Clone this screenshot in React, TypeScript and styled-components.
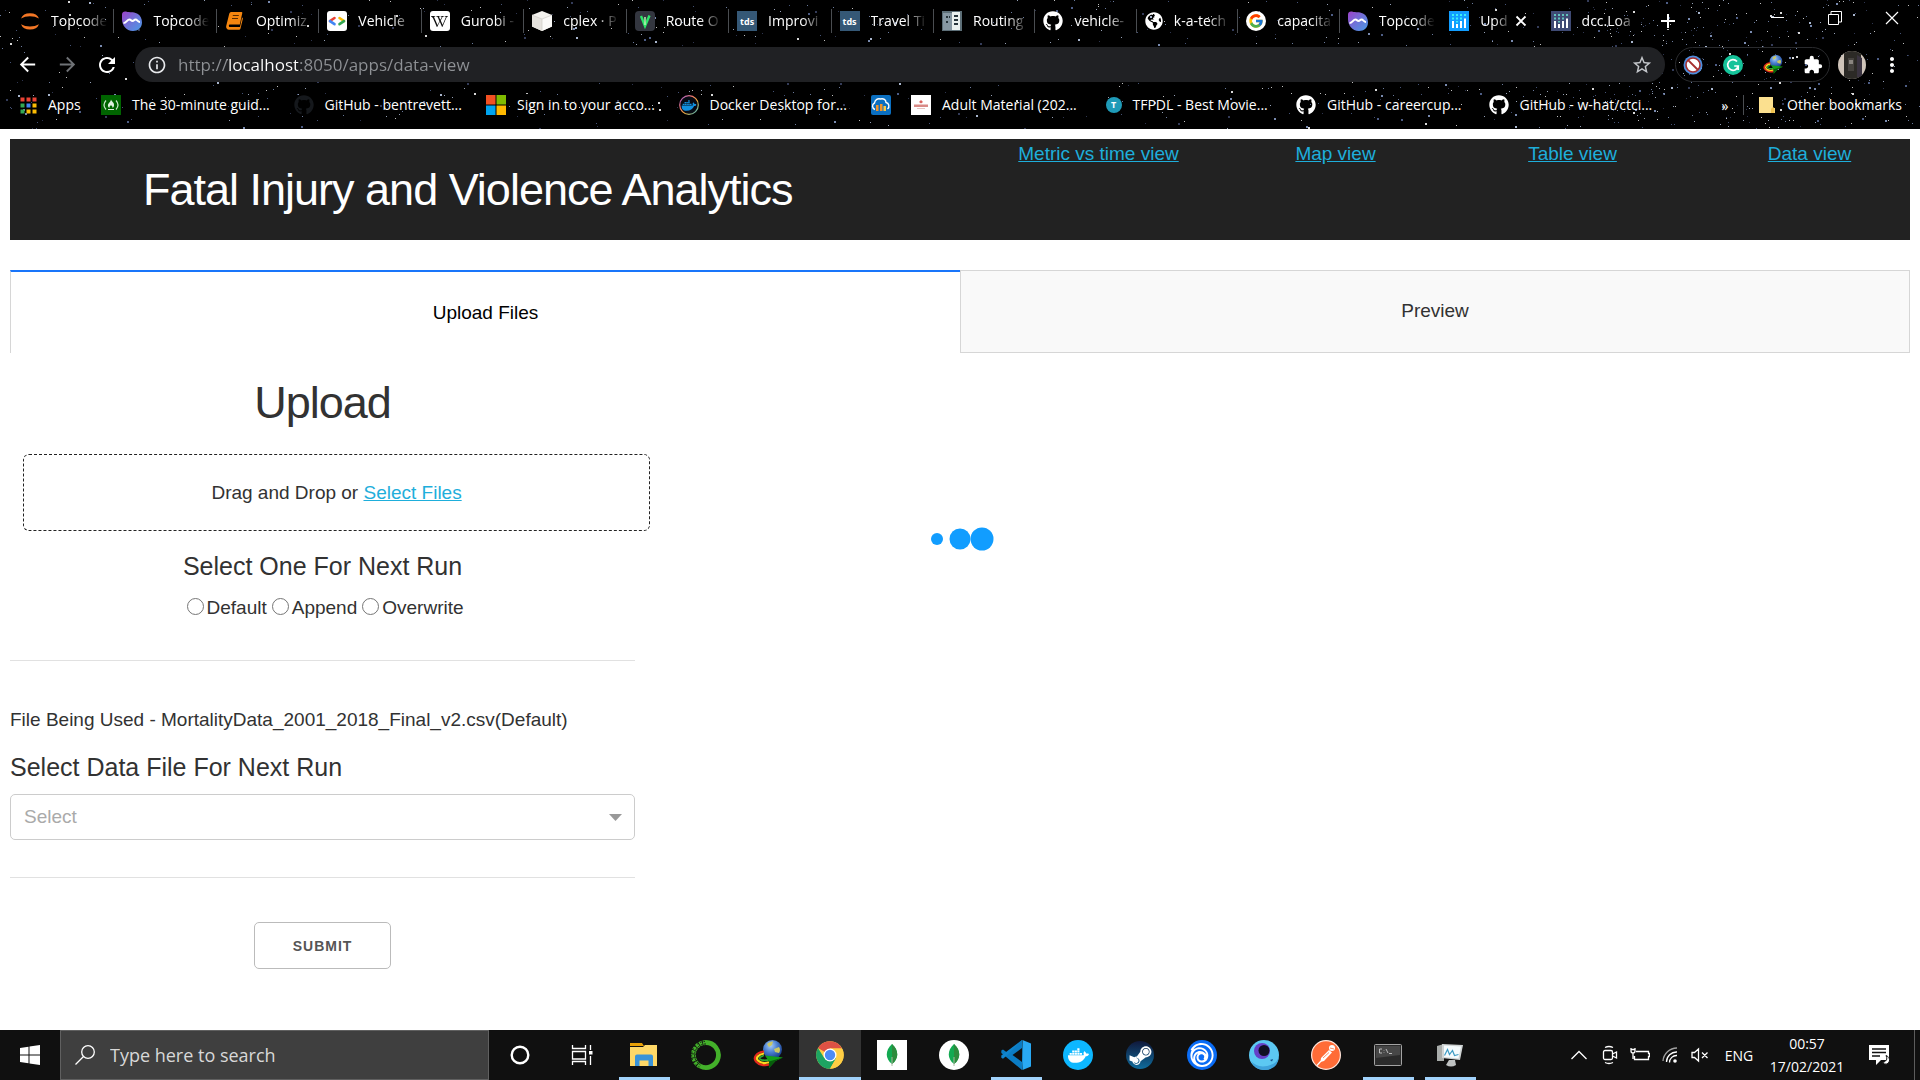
import React from "react";
import styled, { createGlobalStyle, css } from "styled-components";
import {
  MdArrowBack,
  MdArrowForward,
  MdRefresh,
  MdInfoOutline,
  MdStarBorder,
  MdExtension,
  MdMoreVert,
} from "react-icons/md";
import { FaGithub, FaWikipediaW, FaDocker, FaSteamSymbol, FaGlobeAmericas } from "react-icons/fa";
import { FcGoogle } from "react-icons/fc";
import { SiUbisoft } from "react-icons/si";

const uiFont = '"Open Sans", "Noto Sans", sans-serif';
const pageFont = '"Liberation Sans", Arial, sans-serif';

const GlobalStyle = createGlobalStyle`
  *, *::before, *::after { box-sizing: border-box; }
  body { margin: 0; background: #fff; }
  button, input, select { font: inherit; color: inherit; margin: 0; }
`;

/* ---------- shell ---------- */

const Screen = styled.div`
  min-height: 100vh;
  display: flex;
  flex-direction: column;
  font-family: ${pageFont};
`;

const Browser = styled.header`
  position: relative;
  isolation: isolate;
  display: flex;
  flex-direction: column;
  background: #000;
  color: #fff;
  font-family: ${uiFont};
  font-size: 14px;
`;

const StarField = styled.svg`
  position: absolute;
  inset: 0;
  z-index: -1;
  width: 100%;
  height: 100%;
`;

const TitleBar = styled.div`
  display: flex;
  height: 42px;
  padding-left: 12px;
`;

const TabList = styled.div`
  display: grid;
  grid-template-columns: repeat(9, 101fr) repeat(7, 100fr);
  flex: 0 1 1632px;
  min-width: 0;
`;

const BrowserTab = styled.button<{ $divider: boolean; $active: boolean }>`
  display: flex;
  align-items: center;
  min-width: 0;
  gap: 5px;
  padding: 0 ${(p) => (p.$active ? 16 : 2)}px 0 8px;
  border: 0;
  color: #fff;
  background: ${(p) =>
    p.$divider ? "linear-gradient(#4a4d51, #4a4d51) right center / 1px 24px no-repeat" : "none"};
`;

const TabTitle = styled.span<{ $active: boolean }>`
  flex: 1;
  min-width: 0;
  margin-left: 6px;
  white-space: nowrap;
  text-align: left;
  line-height: 20px;
  mask-image: linear-gradient(
    90deg,
    #000 ${(p) => (p.$active ? 14 : 34)}px,
    transparent ${(p) => (p.$active ? 32 : 56)}px
  );
`;

const PlainButton = styled.button<{ $w: number }>`
  display: flex;
  align-items: center;
  justify-content: center;
  flex: none;
  width: ${(p) => p.$w}px;
  padding: 0;
  border: 0;
  background: none;
  color: #fff;
`;

const WindowControls = styled.div`
  display: flex;
  height: 36px;
  margin-left: auto;
`;

const Toolbar = styled.div`
  display: flex;
  align-items: center;
  height: 45px;
  padding: 0 10px 0 7px;
`;

const Omnibox = styled.form`
  display: flex;
  align-items: center;
  flex: 1;
  height: 35px;
  margin: 0 10px 0 9px;
  padding: 0 12px;
  gap: 11px;
  border-radius: 18px;
  background: #202124;
  color: #e8eaed;
`;

const AddressInput = styled.input`
  flex: 1;
  min-width: 0;
  height: 35px;
  padding: 0;
  border: 0;
  outline: 0;
  font-size: 17px;
  color: transparent;
  background: linear-gradient(90deg, #8e9195 49px, #fff 49px, #fff 120px, #8e9195 120px);
  background-clip: text;
  -webkit-background-clip: text;
`;

const ExtensionPill = styled.div`
  display: flex;
  height: 35px;
  width: 155px;
  justify-content: center;
  border: 1px solid #2a2b2e;
  border-radius: 18px;
`;

const Bookmarks = styled.nav`
  display: flex;
  height: 42px;
  padding-left: 20px;
`;

const BookmarkGrid = styled.div`
  display: grid;
  flex: 1;
  grid-template-columns: 81px repeat(4, minmax(0, 1fr)) 40px repeat(4, minmax(0, 1fr));
  align-items: center;
  height: 36px;
`;

const Bookmark = styled.a`
  display: flex;
  align-items: center;
  gap: 11px;
  color: #fff;
  line-height: 20px;
  text-decoration: none;
  white-space: nowrap;
`;

const OtherBookmarks = styled.div`
  display: flex;
  align-items: center;
  justify-content: flex-end;
  width: 239px;
  height: 36px;
  padding-right: 18px;
`;

const Divider = styled.span`
  width: 1px;
  height: 20px;
  margin: 0 14px 0 6px;
  background: #4a4d51;
`;

/* ---------- dashboard ---------- */

const Page = styled.main`
  flex: 1;
  padding: 10px;
  color: #323232;
  font-size: 19px;
  line-height: 30px;
`;

const Banner = styled.header`
  display: flex;
  justify-content: space-between;
  background: #222;
  padding-left: 7%;
`;

const Title = styled.h1<{ $light?: boolean }>`
  margin: 0;
  font-size: 45px;
  font-weight: 400;
  line-height: 54px;
  letter-spacing: -1px;
  ${(p) => p.$light && css`
    padding: 24px 0 23px;
    color: #fff;
    white-space: nowrap;
  `}
`;

const ViewLinks = styled.nav`
  display: grid;
  grid-template-columns: repeat(4, 1fr);
  gap: 36px;
  width: 48%;
  max-width: 912px;
  flex: 1 0 auto;
  text-align: center;
`;

const BannerGap = styled.div`
  flex: 1 1 0;
`;

const Link = styled.a`
  color: #1eaedb;
`;

const PageTabs = styled.div`
  display: grid;
  grid-template-columns: 1fr 1fr;
  margin-top: 30px;
`;

const PageTab = styled.button<{ $selected?: boolean }>`
  padding: 24px 25px 26px;
  line-height: 31px;
  border: 1px solid #d6d6d6;
  background: #f9f9f9;
  ${(p) => p.$selected && css`
    padding: 25px;
    border-top: 2px solid #1975fa;
    border-right: 0;
    border-bottom: 0;
    background: #fff;
    color: #000;
  `}
`;

const Panel = styled.div`
  position: relative;
`;

const Form = styled.form`
  display: flex;
  flex-direction: column;
  align-items: center;
  width: 32.9%;
  padding-top: 23px;
`;

const DropZone = styled.div`
  box-sizing: content-box;
  width: 100%;
  flex: none;
  align-self: flex-start;
  margin: 24px 13px 19px;
  border: 1px dashed #222;
  border-radius: 6px;
  line-height: 75px;
  text-align: center;
`;

const Heading = styled.h2<{ $start?: boolean }>`
  margin: 0 0 11px;
  font-size: 25px;
  font-weight: 400;
  line-height: 32px;
  align-self: ${(p) => (p.$start ? "flex-start" : "center")};
`;

const Radios = styled.div`
  display: flex;
`;

const RadioLabel = styled.label`
  display: flex;
  align-items: center;
  gap: 3px;
`;

const Radio = styled.input`
  && { margin: 0 0 3px 5px; }
  appearance: none;
  width: 17px;
  height: 17px;
  border: 1px solid #767676;
  border-radius: 50%;
  background: #fff;
`;

const Rule = styled.hr`
  width: 100%;
  margin: 37px 0 44px;
  border: 0;
  border-top: 1px solid #e1e1e1;
`;

const FileNote = styled.p`
  align-self: flex-start;
  margin: 0 0 16px;
  white-space: nowrap;
`;

const SelectBox = styled.div`
  display: grid;
  align-items: center;
  width: 100%;
  & > * { grid-area: 1 / 1; }
  & > svg { justify-self: end; margin-right: 13px; pointer-events: none; }
`;

const Select = styled.select`
  appearance: none;
  width: 100%;
  height: 46px;
  padding: 0 13px;
  border: 1px solid #ccc;
  border-radius: 5px;
  background: #fff;
  color: #aaa;
`;

const Submit = styled.button`
  height: 47px;
  padding: 0 38px;
  border: 1px solid #bbb;
  border-radius: 5px;
  background: #fff;
  color: #555;
  font-size: 14px;
  font-weight: 600;
  letter-spacing: 1px;
`;

const Loading = styled.div`
  position: absolute;
  inset: 174px 0 auto;
  display: flex;
  justify-content: center;
  pointer-events: none;
`;

/* ---------- taskbar ---------- */

const Taskbar = styled.footer`
  display: flex;
  height: 50px;
  background: #101010;
  color: #fff;
  font-family: ${uiFont};
  font-size: 14px;
`;

const Search = styled.label`
  display: flex;
  align-items: center;
  gap: 15px;
  width: 429px;
  padding-left: 14px;
  border: 1px solid #606060;
  background: #3f3f3f;
`;

const SearchInput = styled.input`
  flex: 1;
  min-width: 0;
  padding: 0;
  border: 0;
  outline: 0;
  background: none;
  font-size: 18px;
  &::placeholder { color: #d8d8d8; opacity: 1; }
`;

const TaskButton = styled.button<{ $state?: "open" | "active" }>`
  display: flex;
  align-items: center;
  justify-content: center;
  width: 62px;
  padding: 0;
  border: 0;
  background: ${(p) => {
    const bar = "linear-gradient(#a1d2fb, #a1d2fb) center bottom";
    if (p.$state === "active") return `${bar} / 100% 3px no-repeat #333`;
    if (p.$state === "open") return `${bar} / 51px 3px no-repeat`;
    return "none";
  }};
`;

const Tray = styled.div`
  display: flex;
  align-items: center;
  margin-left: auto;
  padding-right: 5px;
`;

const Language = styled.span`
  width: 48px;
  text-align: center;
`;

const Clock = styled.time`
  width: 86px;
  margin: 0 14px 0 1px;
  line-height: 23px;
  text-align: center;
`;

const ShowDesktop = styled.span`
  width: 1px;
  height: 50px;
  margin-left: 20px;
  background: #5c5c5c;
`;

/* ---------- drawings ---------- */

const Stars = () => {
  let seed = 20210217;
  const rnd = () => {
    seed = (seed * 1103515245 + 12345) % 2147483648;
    return seed / 2147483648;
  };
  const tints = ["#8ea3cf", "#5b6d9c", "#c7d6f2", "#ffffff", "#3d4768"];
  const dots: React.ReactNode[] = [];
  for (let i = 0; i < 1250; i++) {
    let x = rnd() * 1920;
    if (i > 850) x = 1690 + (rnd() + rnd() + rnd() - 1.5) * 240;
    const y = rnd() * 129;
    const big = rnd() > 0.84;
    const tint = tints[Math.floor(rnd() * tints.length)];
    dots.push(
      <rect key={i} x={Math.floor(x)} y={Math.floor(y)} width={big ? 2 : 1} height={big ? 2 : 1} fill={tint} opacity={big ? 0.85 : 0.75} />
    );
  }
  return (
    <StarField viewBox="0 0 1920 129" preserveAspectRatio="xMidYMid slice" aria-hidden="true">
      {dots}
    </StarField>
  );
};

const Drawing = styled.svg`
  flex: none;
`;

const Svg = ({ s = 20, vb = 20, children }: { s?: number; vb?: number; children: React.ReactNode }) => (
  <Drawing width={s} height={s} viewBox={`0 0 ${vb} ${vb}`} fill="none" aria-hidden="true">
    {children}
  </Drawing>
);

const Jupyter = () => (
  <Svg>
    <path d="M1 7.4a9.4 7.4 0 0 1 18 0 13 8 0 0 0-18 0z" fill="#f37726" />
    <path d="M1 13.2a9.4 7.4 0 0 0 18 0 13 8 0 0 1-18 0z" fill="#f37726" />
  </Svg>
);

const Topcoder = () => (
  <Svg>
    <defs>
      <linearGradient id="tc" x1="0" y1="0" x2="1" y2="1">
        <stop offset="0" stopColor="#9d41c9" />
        <stop offset=".5" stopColor="#6f73d8" />
        <stop offset="1" stopColor="#4a9be8" />
      </linearGradient>
    </defs>
    <path d="M0 3.5C0 1 2 0 4 .5c4 1.3 7 0 11 2 3.5 1.7 5 5 5 9 0 5-4 8.5-9 8.500C4 20 0 14 0 8z" fill="url(#tc)" />
    <path d="M1.500 12c3 0 3.500-3.500 6-3.500 1.500 0 1.500 1.500 3 1.500s1.500-1.500 3-1.500c2 0 2 2.500 4.500 2.500" stroke="#fff" strokeWidth="2" />
  </Svg>
);

const Book = () => (
  <Svg>
    <path d="M6 1h10.500q1 0 .8 1L14.800 13.500H4.500a1.500 1.500 0 0 0 0 2.500H15L17 6.500q1.200 0 .8 1.500L15.500 17.500q-.3 1.300-1.500 1.300H4A3 3 0 0 1 1.200 15L4.300 2.500Q4.800 1 6 1z" fill="#f5860f" />
    <path d="M7.800 4.500h6M7 7.500h6" stroke="#5a2c00" strokeWidth="1.200" />
  </Svg>
);

const Developers = () => (
  <Svg>
    <rect width="20" height="20" rx="3" fill="#fff" />
    <g strokeWidth="2.600" strokeLinecap="round">
      <path d="M7.500 7 3 10" stroke="#ea4335" />
      <path d="M3 10.200l4.500 3" stroke="#4285f4" />
      <path d="M12.500 7 17 10" stroke="#fbbc04" />
      <path d="M17 10.200l-4.500 3" stroke="#34a853" />
    </g>
  </Svg>
);

const Tile = styled.span<{ $bg: string; $fg?: string; $round?: number; $size?: number }>`
  display: inline-flex;
  align-items: center;
  justify-content: center;
  flex: none;
  width: ${(p) => p.$size ?? 20}px;
  height: ${(p) => p.$size ?? 20}px;
  border-radius: ${(p) => p.$round ?? 0}px;
  background: ${(p) => p.$bg};
  color: ${(p) => p.$fg ?? "#fff"};
  font-size: 9px;
  font-weight: 700;
`;

const Wiki = () => (
  <Tile $bg="#fff" $fg="#111" $round={3}><FaWikipediaW size={17} /></Tile>
);

const Cube = () => (
  <Svg>
    <path d="M10 0 20 4v11.500L10 20 0 15.500V4z" fill="#f4f2ee" />
    <path d="M0 4l10 4v12L0 15.500z" fill="#e6e3de" />
    <path d="M20 4 10 8v12l10-4.500z" fill="#fbfaf8" />
    <path d="M0 4l10 4 10-4M10 8v12" stroke="#cfccc6" strokeWidth=".7" />
  </Svg>
);

const RouteMark = () => (
  <Svg>
    <rect width="20" height="20" rx="4" fill="#33363f" />
    <path d="M6 5l4 10 4.500-10.500" stroke="#2ee66b" strokeWidth="2.400" />
    <path d="M10 6v8" stroke="#b9f6b0" strokeWidth="1.500" />
  </Svg>
);

const Tds = () => <Tile $bg="#355876">tds</Tile>;

const Building = () => (
  <Svg>
    <rect width="20" height="20" fill="#5d6f78" />
    <path d="M1 2h9v17H1z" fill="#8798a3" />
    <path d="M10 1h8v18h-8z" fill="#e9f0ef" />
    <path d="M4 5h2v2H4zM7 5h1v2H7zM4 10h2v2H4zM12 4h4v2h-4zM12 8h4v2h-4zM12 12h4v2h-4z" fill="#26343b" />
  </Svg>
);

const Plotly = ({ dark }: { dark?: boolean }) => (
  <Svg>
    <rect width="20" height="20" fill={dark ? "#3f4a74" : "#119dff"} />
    <path d="M4 10v7M8 13v4M12 10v7M16 7.500v9.500" stroke="#fff" strokeWidth="2" />
    <path d="M4 3v2M4 6.500v2M8 3v2M8 6.500v2M8 10v1.500M12 3v2M12 6.500v2M16 3v2" stroke={dark ? "#62c3bd" : "#3bf0f5"} strokeWidth="2" />
  </Svg>
);

const AppsGrid = () => {
  const colors = ["#ea4335", "#ea4335", "#ea4335", "#34a853", "#4285f4", "#fbbc04", "#34a853", "#fbbc04", "#fbbc04"];
  return (
    <Svg s={17} vb={17}>
      {colors.map((c, i) => (
        <rect key={i} x={(i % 3) * 6 + 0.5} y={Math.floor(i / 3) * 6 + 0.5} width="4" height="4" fill={c} />
      ))}
    </Svg>
  );
};

const FreeCodeCamp = () => (
  <Svg>
    <rect width="20" height="20" fill="#006400" />
    <path d="M5 5.500q-4 4.500 0 9M15 5.500q4 4.500 0 9" stroke="#c9e5c9" strokeWidth="1.200" />
    <path d="M10 4.500c.5 2 3.500 3 3 6-.2 1.500-1 2-1.500 2.500.3-1.500-.8-2-1.500-3-.7 1-1.800 1.500-1.500 3-1-.6-1.800-1.500-1.500-3.200C7.300 8 9.500 7.500 10 4.500zM7 14h6v1H7z" fill="#dff0df" />
  </Svg>
);

const Microsoft = () => (
  <Svg>
    <path d="M0 0h9.500v9.500H0z" fill="#f25022" />
    <path d="M10.500 0H20v9.500h-9.500z" fill="#7fba00" />
    <path d="M0 10.500h9.500V20H0z" fill="#00a4ef" />
    <path d="M10.500 10.500H20V20h-9.500z" fill="#ffb900" />
  </Svg>
);

const DockerRing = () => (
  <Svg>
    <defs>
      <linearGradient id="ring" x1="0" y1="0" x2="1" y2="1">
        <stop offset="0" stopColor="#8f5be0" />
        <stop offset=".35" stopColor="#f0776a" />
        <stop offset=".6" stopColor="#f6b13c" />
        <stop offset="1" stopColor="#2bb6d6" />
      </linearGradient>
    </defs>
    <circle cx="10" cy="10" r="9.300" fill="#070b14" stroke="url(#ring)" strokeWidth="1.200" />
    <g transform="translate(2.500 3)" color="#1191e0"><FaDocker size={15} /></g>
  </Svg>
);

const CloudChart = () => (
  <Svg>
    <rect width="20" height="20" rx="2" fill="#0b6fc0" />
    <path d="M4 14.500a3.500 3.500 0 0 1-.5-6.500C4 4.500 7 3 9.500 4c3-1 5.500 1 5.500 3.500 3 .5 4 4.500 1.500 6.500" stroke="#fff" strokeWidth="1.400" />
    <path d="M5 10h2.500v6H5zM9 9h2.500v7H9z" fill="#f0932b" />
    <path d="M12.500 11H15v5h-2.500z" fill="#fdc842" />
  </Svg>
);

const AdultMaterial = () => (
  <Svg>
    <rect width="20" height="20" fill="#fff" />
    <path d="M3 9.500h14v2.500H3z" fill="#d98a86" />
    <path d="M10 5l2 2-2 1.500L8 7z" fill="#d9625e" />
    <path d="M6 13.500h8" stroke="#e6c4c2" />
  </Svg>
);

const Tfpdl = styled(Tile)`
  margin: 0 0 0 2px;
`;

const Folder = () => (
  <Svg s={18} vb={18}>
    <path d="M1 1h14v11h2v5H1z" fill="#fbe08f" />
    <path d="M13 17v-4q2-3 3.500-.5V17z" fill="#efc24f" />
  </Svg>
);

const Blocker = () => (
  <Svg>
    <circle cx="10" cy="10" r="9.500" fill="#4d8fe0" />
    <circle cx="10" cy="10" r="7" fill="#fff" stroke="#a52f2f" strokeWidth="1.600" />
    <path d="M5 5l10 10" stroke="#a52f2f" strokeWidth="1.800" />
  </Svg>
);

const Grammarly = () => (
  <Svg>
    <circle cx="10" cy="10" r="10" fill="#15c39a" />
    <path d="M14 6.500a5.300 5.300 0 1 0 1.200 4.500h-4M15.200 11v4" stroke="#fff" strokeWidth="1.700" />
  </Svg>
);

const Idm = ({ s = 20 }: { s?: number }) => (
  <Svg s={s} vb={30}>
    <defs>
      <radialGradient id="globe" cx=".4" cy=".3" r=".7">
        <stop offset="0" stopColor="#a9cdf5" />
        <stop offset=".5" stopColor="#4a7fd0" />
        <stop offset="1" stopColor="#1b3f8c" />
      </radialGradient>
    </defs>
    <circle cx="19.500" cy="9.500" r="9.500" fill="url(#globe)" />
    <path d="M14 4q3-3 6-2.500l-1 3.500-3 2zM21 9l5-2q2 3 0 6l-4-1z" fill="#c9c765" />
    <path d="M11 11.500C3 12.500 0 18 3 21.500S12 26 16 24.500" stroke="#e4281e" strokeWidth="2.200" />
    <path d="M11 13.500C5 14.500 2.500 18 5 20.500s7 3 11 1.800" stroke="#ffd51e" strokeWidth="2.200" />
    <path d="M11 15.500C7 16.500 5.500 18.500 7.500 19.500s5 1 8 .5" stroke="#30a836" strokeWidth="1.800" />
    <path d="M12 15.500 30 17.500 22.500 21 16 28v-6.500z" fill="#12a01a" />
    <path d="M16 21.500 30 17.500 22.500 21 16 28z" fill="#075c0b" />
  </Svg>
);

const Avatar = () => (
  <Svg s={28} vb={28}>
    <defs><clipPath id="av"><circle cx="14" cy="14" r="14" /></clipPath></defs>
    <g clipPath="url(#av)">
      <rect width="28" height="28" fill="#cfc4b9" />
      <path d="M6 0h17v28H6z" fill="#2c2a26" />
      <path d="M10 7h6v13h-6z" fill="#45423e" />
      <path d="M11 9h4v4h-4z" fill="#8a8580" />
      <path d="M19 4l5 3v19h-5z" fill="#3a3340" />
    </g>
  </Svg>
);

const WindowsLogo = () => (
  <Svg>
    <path d="M0 3l8.500-1.200v7.800H0zM9.500 1.600 20 0v9.600H9.500zM0 10.500h8.500v7.800L0 17.100zM9.500 10.500H20V20L9.500 18.500z" fill="#fff" />
  </Svg>
);

const TaskView = () => (
  <Svg s={22} vb={22}>
    <path d="M1.500 1v3.500h13V1M1.500 21v-3.500h13V21M1.500 7.500h13v7.500h-13zM19.500 1v5M19.500 12v9" stroke="#fff" strokeWidth="1.300" />
    <path d="M18 7h3.500v3.500H18z" fill="#fff" />
  </Svg>
);

const Explorer = () => (
  <Svg s={28} vb={28}>
    <path d="M0 2h12l2 3H0z" fill="#e8a006" />
    <path d="M0 6h13l2-2h12v21H0z" fill="#ffd867" />
    <path d="M5 25V15.500q0-2 2-2h14q2 0 2 2V25h-4.500v-5.500h-9V25z" fill="#3a93d8" />
  </Svg>
);

const Anaconda = () => (
  <Svg s={30} vb={30}>
    <path d="M15 2.500A12.500 12.500 0 1 1 9 26" stroke="#43b02a" strokeWidth="4.800" />
    <path d="M15 2.500A12.500 12.500 0 0 0 9 26" stroke="#43b02a" strokeWidth="4.800" strokeDasharray="3 .8" />
    <path d="M14 1.500A13.500 13.500 0 0 0 8 27" stroke="#101010" strokeWidth=".9" strokeDasharray="1.500 2" />
    <path d="M15 4A11 11 0 0 0 9 24.500" stroke="#101010" strokeWidth=".9" strokeDasharray="2 1.500" />
  </Svg>
);

const Chrome = () => (
  <Svg s={28} vb={28}>
    <circle cx="14" cy="14" r="13.800" fill="#ffce44" />
    <path d="M14 14 2 7.100A13.800 13.800 0 0 1 26 7.500H14z" fill="#dd5144" />
    <path d="M2 7.100A13.800 13.800 0 0 0 14 27.800l6-10.300-6-3.500-5.600 3.200z" fill="#1da462" />
    <path d="M20 17.500 14 27.800A13.800 13.800 0 0 0 26 7.500H14z" fill="#ffce44" />
    <circle cx="14" cy="14" r="6.500" fill="#fff" />
    <circle cx="14" cy="14" r="5.200" fill="#4c8bf5" />
  </Svg>
);

const Leaf = ({ round }: { round?: boolean }) => (
  <Svg s={30} vb={30}>
    <rect width="30" height="30" rx={round ? 15 : 0} fill="#fff" />
    <path d="M15 4c7 6 7 15 0 20-7-5-7-14 0-20z" fill="#13aa52" />
    <path d="M15 4c7 6 7 15 0 20z" fill="#2e8b3d" />
    <path d="M15 17v9" stroke="#a9b8a0" />
  </Svg>
);

const VsCode = () => (
  <Svg s={30} vb={30}>
    <path d="M21 0l-14 13.200L2 9.500.3 10.600v2.500L21 30l1-9z" fill="#0b7cc4" />
    <path d="M21.500 0 7 14.500l-5 4.300-1.700-1V15.500L21 0z" fill="#1084cd" />
    <path d="M21 8 11.500 15 21 22z" fill="#101010" />
    <path d="M21.500 0 30 3.500v23L21.500 30z" fill="#29a9f3" />
  </Svg>
);

const GooseMoon = () => (
  <Svg s={30} vb={30}>
    <circle cx="15" cy="15" r="15" fill="#5cc8f2" />
    <path d="M2 21q8 9 22 3 5-3 6-8-1 14-15 14Q6 30 2 21z" fill="#3fa3dc" />
    <circle cx="13" cy="11" r="8" fill="#6540c8" />
    <circle cx="15" cy="10.500" r="5.500" fill="#101024" />
    <path d="M21 20l3-1-1 2.500z" fill="#17508c" />
  </Svg>
);

const Postman = () => (
  <Svg s={30} vb={30}>
    <circle cx="15" cy="15" r="14.400" fill="#ff6c37" stroke="#ffe6dc" strokeWidth="1.200" />
    <circle cx="21" cy="8" r="3" fill="#fff" />
    <path d="M18 10l3 2.500-8 8.500-3.500 1 .5-4z" fill="#fff" />
    <path d="M10 21l-4 4.500" stroke="#fff" strokeWidth="1.200" />
    <path d="M12 18l6-5.500M19 8l4 1" stroke="#ff6c37" strokeWidth=".8" />
  </Svg>
);

const Terminal = () => (
  <Svg s={30} vb={30}>
    <rect x="1.500" y="4.500" width="27" height="21" rx="1" fill="#2b2b2b" stroke="#a3a3a3" />
    <path d="M3 6h24v9L3 18z" fill="#474747" />
    <path d="M9 9H6.500v4H9M11 10v.5M11 12v.5M13 9l2 4M16 13.500h3" stroke="#c8c8c8" strokeWidth=".9" />
  </Svg>
);

const Monitor = () => (
  <Svg s={30} vb={30}>
    <path d="M2 6l7-2v17H2z" fill="#a9adab" />
    <path d="M7 4l21 1-3 15L7 18z" fill="#cfd3d3" />
    <path d="M9 5.500l17 1-2.500 12L9 17z" fill="#f5fbfd" />
    <path d="M9.500 15.500l3-6 2 5 3-4 2 5 4-1" stroke="#3f9cc4" strokeWidth="1.200" />
    <path d="M14 20h6l1 5q-5 3-10 0z" fill="#bfc2c2" />
  </Svg>
);

const line = { stroke: "#fff", strokeWidth: 1.3, fill: "none" };

const Camera = () => (
  <Svg>
    <rect x="3.500" y="5.500" width="9" height="9" rx="1.500" {...line} />
    <path d="M12.500 9l4-2v6l-4-2M5 2.500q4-2 8 0M5 17.500q4 2 8 0" {...line} />
  </Svg>
);

const Battery = () => (
  <Svg>
    <path d="M6 6.500h12.500v2h1v3h-1v3H4.500V11M1 3v3q0 2 2 2t2-2V3M.5 4.500h5M3 8v6" {...line} />
  </Svg>
);

const Wifi = () => (
  <Svg>
    <path d="M3 16A14 14 0 0 1 17 3" stroke="#a0a0a0" strokeWidth="1.300" />
    <path d="M6.500 17A10 10 0 0 1 17 7M9.500 17.500a7 7 0 0 1 7.500-7" {...line} />
    <circle cx="15" cy="16" r="1.800" fill="#fff" />
  </Svg>
);

const Muted = () => (
  <Svg>
    <path d="M2 7.500h2.500L8.500 4v12l-4-3.500H2zM12 7.500l5.500 5.500M17.500 7.500 12 13" {...line} />
  </Svg>
);

/* ---------- data ---------- */

const tabs: [React.ReactNode, string][] = [
  [<Jupyter />, "Topcode"],
  [<Topcoder />, "Topcode"],
  [<Book />, "Optimiz"],
  [<Developers />, "Vehicle"],
  [<Wiki />, "Gurobi -"],
  [<Cube />, "cplex · P"],
  [<RouteMark />, "Route O"],
  [<Tds />, "Improvi"],
  [<Tds />, "Travel Ti"],
  [<Building />, "Routing"],
  [<FaGithub size={20} />, "vehicle-"],
  [<FaGlobeAmericas size={18} />, "k-a-tech"],
  [<Tile $bg="#fff" $round={10}><FcGoogle size={16} /></Tile>, "capacita"],
  [<Topcoder />, "Topcode"],
  [<Plotly />, "Upd"],
  [<Plotly dark />, "dcc.Loa"],
];

const activeTab = 14;

const bookmarks: [React.ReactNode, string][] = [
  [<AppsGrid />, "Apps"],
  [<FreeCodeCamp />, "The 30-minute guid..."],
  [<FaGithub size={20} color="#15181c" />, "GitHub - bentrevett..."],
  [<Microsoft />, "Sign in to your acco..."],
  [<DockerRing />, "Docker Desktop for..."],
  [<CloudChart />, ""],
  [<AdultMaterial />, "Adult Material (202..."],
  [<Tfpdl $bg="#1f9bb8" $round={8} $size={16}>T</Tfpdl>, "TFPDL - Best Movie..."],
  [<FaGithub size={20} />, "GitHub - careercup..."],
  [<FaGithub size={20} />, "GitHub - w-hat/ctci..."],
];

const taskApps: [string, React.ReactNode, ("open" | "active")?][] = [
  ["Cortana", <Svg><circle cx="10" cy="10" r="8.300" stroke="#fff" strokeWidth="2.400" /></Svg>],
  ["Task view", <TaskView />],
  ["File Explorer", <Explorer />, "open"],
  ["Anaconda", <Anaconda />],
  ["Download manager", <Idm s={30} />],
  ["Chrome", <Chrome />, "active"],
  ["MongoDB", <Leaf />],
  ["MongoDB Compass", <Leaf round />],
  ["Visual Studio Code", <VsCode />, "open"],
  ["Docker", <Tile $bg="#0db7ff" $round={15} $size={30}><FaDocker size={21} /></Tile>],
  ["Steam", <Tile $bg="linear-gradient(#10183a, #0f6c9c)" $round={14} $size={28}><FaSteamSymbol size={25} /></Tile>],
  ["Ubisoft Connect", <Tile $bg="#0a6cf5" $round={15} $size={30}><SiUbisoft size={24} /></Tile>],
  ["GameLoop", <GooseMoon />],
  ["Postman", <Postman />],
  ["Command Prompt", <Terminal />, "open"],
  ["Resource Monitor", <Monitor />, "open"],
];

/* ---------- app ---------- */

export default function App() {
  return (
    <Screen>
      <GlobalStyle />
      <Browser>
        <Stars />
        <TitleBar>
          <TabList>
            {tabs.map(([icon, title], i) => (
              <BrowserTab key={i} type="button" $divider={i < 13} $active={i === activeTab}>
                {icon}
                <TabTitle $active={i === activeTab}>{title}</TabTitle>
                {i === activeTab && (
                  <Svg s={12} vb={12}><path d="M1.500 1.500l9 9M10.500 1.500l-9 9" stroke="#fff" strokeWidth="1.800" /></Svg>
                )}
              </BrowserTab>
            ))}
          </TabList>
          <PlainButton $w={48} type="button" aria-label="New tab">
            <Svg s={16} vb={16}><path d="M8 1v14M1 8h14" stroke="#fff" strokeWidth="2" /></Svg>
          </PlainButton>
          <WindowControls>
            <PlainButton $w={57} type="button" aria-label="Minimize">
              <Svg s={14} vb={14}><path d="M0 6.500h13" stroke="#fff" /></Svg>
            </PlainButton>
            <PlainButton $w={57} type="button" aria-label="Restore">
              <Svg s={14} vb={14}><path d="M.5 3.500h10v10H.5zM3 3.500v-3h10.500V11H11" stroke="#fff" /></Svg>
            </PlainButton>
            <PlainButton $w={57} type="button" aria-label="Close">
              <Svg s={14} vb={14}><path d="M1 1l12 12M13 1 1 13" stroke="#fff" strokeWidth="1.200" /></Svg>
            </PlainButton>
          </WindowControls>
        </TitleBar>
        <Toolbar>
          <PlainButton $w={40} type="button" aria-label="Back"><MdArrowBack size={23} /></PlainButton>
          <PlainButton $w={40} type="button" aria-label="Forward"><MdArrowForward size={23} color="#6f7276" /></PlainButton>
          <PlainButton $w={39} type="button" aria-label="Reload"><MdRefresh size={24} /></PlainButton>
          <Omnibox>
            <MdInfoOutline size={20} />
            <AddressInput aria-label="Address" defaultValue="http://localhost:8050/apps/data-view" />
            <MdStarBorder size={22} color="#c4c7cb" />
          </Omnibox>
          <ExtensionPill>
            <PlainButton $w={40} type="button" aria-label="Blocker"><Blocker /></PlainButton>
            <PlainButton $w={40} type="button" aria-label="Grammarly"><Grammarly /></PlainButton>
            <PlainButton $w={40} type="button" aria-label="Download manager"><Idm /></PlainButton>
            <PlainButton $w={40} type="button" aria-label="Extensions"><MdExtension size={20} /></PlainButton>
          </ExtensionPill>
          <PlainButton $w={44} type="button" aria-label="Profile"><Avatar /></PlainButton>
          <PlainButton $w={36} type="button" aria-label="Menu"><MdMoreVert size={24} /></PlainButton>
        </Toolbar>
        <Bookmarks aria-label="Bookmarks">
          <BookmarkGrid>
            {bookmarks.map(([icon, title], i) => (
              <Bookmark key={i} href="#" aria-label={title || "Cloud analytics"}>
                {icon}
                {title && <span>{title}</span>}
              </Bookmark>
            ))}
          </BookmarkGrid>
          <OtherBookmarks>
            <PlainButton $w={24} type="button">»</PlainButton>
            <Divider />
            <Bookmark href="#">
              <Folder />
              <span>Other bookmarks</span>
            </Bookmark>
          </OtherBookmarks>
        </Bookmarks>
      </Browser>

      <Page>
        <Banner>
          <Title $light>Fatal Injury and Violence Analytics</Title>
          <BannerGap />
          <ViewLinks>
            <span><Link href="#">Metric vs time view</Link></span>
            <span><Link href="#">Map view</Link></span>
            <span><Link href="#">Table view</Link></span>
            <span><Link href="#">Data view</Link></span>
          </ViewLinks>
        </Banner>
        <PageTabs role="tablist">
          <PageTab $selected type="button" role="tab" aria-selected="true">Upload Files</PageTab>
          <PageTab type="button" role="tab" aria-selected="false">Preview</PageTab>
        </PageTabs>
        <Panel>
          <Form>
            <Title as="h2">Upload</Title>
            <DropZone>Drag and Drop or <Link href="#">Select Files</Link></DropZone>
            <Heading>Select One For Next Run</Heading>
            <Radios>
              {["Default", "Append", "Overwrite"].map((name) => (
                <RadioLabel key={name}>
                  <Radio type="radio" name="mode" value={name} />
                  {name}
                </RadioLabel>
              ))}
            </Radios>
            <Rule />
            <FileNote>File Being Used - MortalityData_2001_2018_Final_v2.csv(Default)</FileNote>
            <Heading $start as="label" htmlFor="data-file">Select Data File For Next Run</Heading>
            <SelectBox>
              <Select id="data-file" defaultValue="">
                <option value="">Select</option>
              </Select>
              <svg width="13" height="7" viewBox="0 0 13 7" aria-hidden="true"><path d="M0 0h13L6.500 7z" fill="#999" /></svg>
            </SelectBox>
            <Rule />
            <Submit type="button">SUBMIT</Submit>
          </Form>
          <Loading>
            <svg width="68" height="24" viewBox="0 0 68 24" fill="#119dff" role="img" aria-label="Loading">
              <circle cx="11" cy="12" r="6" />
              <circle cx="34" cy="12" r="10.500" />
              <circle cx="56" cy="12" r="11.500" />
            </svg>
          </Loading>
        </Panel>
      </Page>

      <Taskbar>
        <PlainButton $w={60} type="button" aria-label="Start"><WindowsLogo /></PlainButton>
        <Search>
          <Svg>
            <circle cx="13" cy="7" r="6.300" stroke="#fff" strokeWidth="1.300" />
            <path d="M8.500 11.500.500 19.500" stroke="#fff" strokeWidth="1.300" />
          </Svg>
          <SearchInput aria-label="Search" placeholder="Type here to search" />
        </Search>
        {taskApps.map(([name, icon, state]) => (
          <TaskButton key={name} type="button" aria-label={name} $state={state}>{icon}</TaskButton>
        ))}
        <Tray>
          <PlainButton $w={32} type="button" aria-label="Show hidden icons">
            <Svg s={18} vb={18}><path d="M1.500 13 9 5.500l7.500 7.500" {...line} /></Svg>
          </PlainButton>
          <PlainButton $w={30} type="button" aria-label="Camera"><Camera /></PlainButton>
          <PlainButton $w={30} type="button" aria-label="Battery"><Battery /></PlainButton>
          <PlainButton $w={30} type="button" aria-label="Network"><Wifi /></PlainButton>
          <PlainButton $w={30} type="button" aria-label="Volume"><Muted /></PlainButton>
          <Language>ENG</Language>
          <Clock>00:57<br />17/02/2021</Clock>
          <PlainButton $w={30} type="button" aria-label="Notifications">
            <Svg s={22} vb={22}>
              <path d="M1 1h20v15h-8l-5 5v-5H1z" fill="#fff" />
              <path d="M4 5h14M4 8.500h14M4 12h8" stroke="#101010" strokeWidth="1.400" />
              <path d="M18 11.500q3 5-4 7.500 6 3 7.500-2 .5-4-3.500-5.500z" fill="#fff" stroke="#101010" />
            </Svg>
          </PlainButton>
          <ShowDesktop />
        </Tray>
      </Taskbar>
    </Screen>
  );
}
